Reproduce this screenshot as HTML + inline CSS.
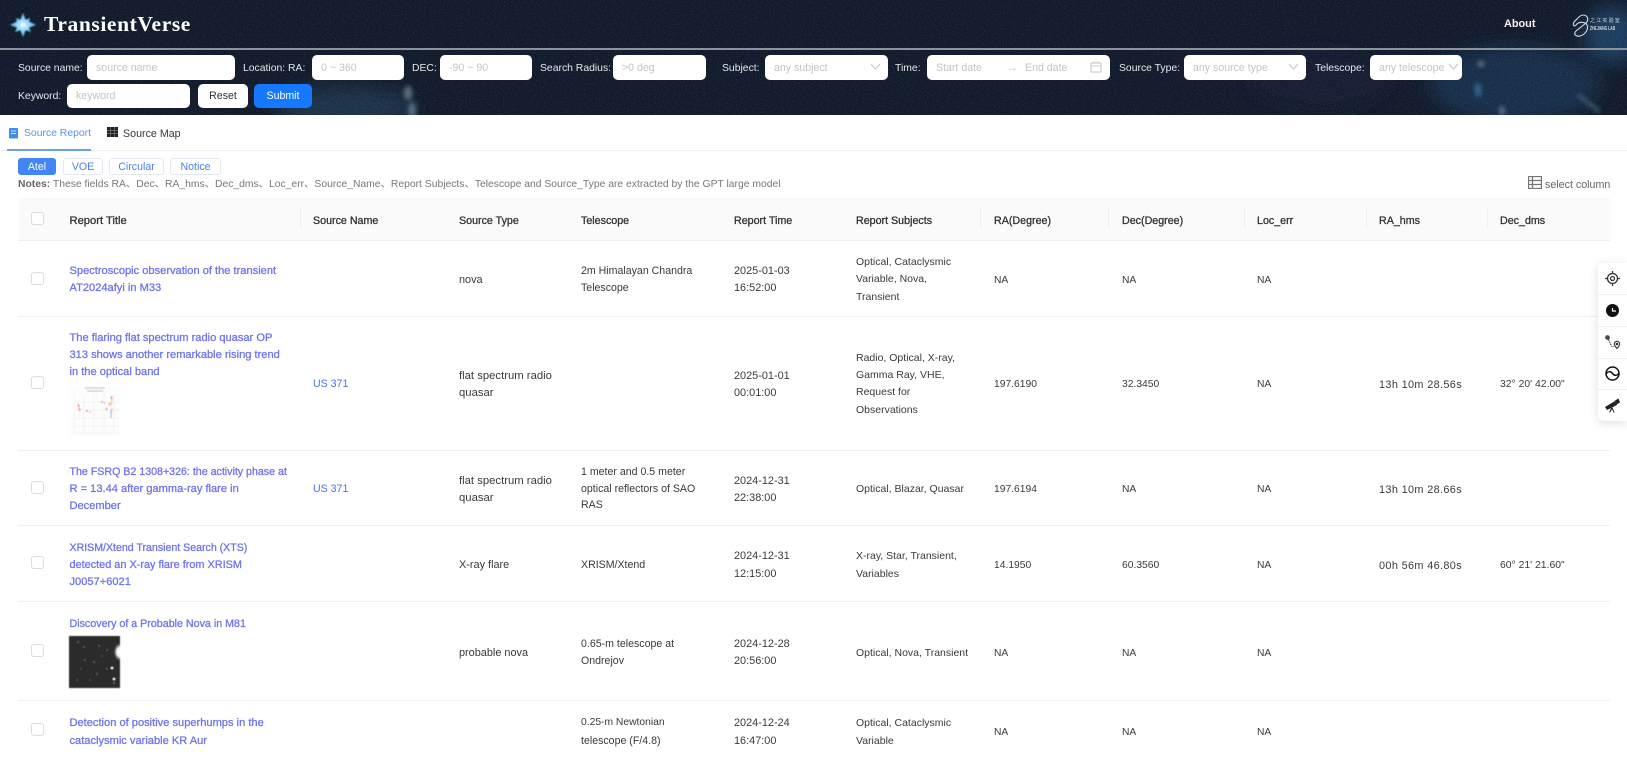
<!DOCTYPE html>
<html lang="en"><head><meta charset="utf-8"><title>TransientVerse</title>
<style>
*{box-sizing:border-box}
html,body{margin:0;padding:0;background:#fff}
body{width:1627px;height:759px;overflow:hidden;position:relative;font-family:"Liberation Sans","Noto Sans CJK SC",sans-serif;font-size:11.4px;color:#2b2b2b;filter:blur(.3px)}
#hd{position:absolute;left:0;top:0;width:1627px;height:115px;overflow:hidden;background:#111a2b}
#hd svg.bg{position:absolute;left:0;top:0}
.line{position:absolute;left:0;top:48px;width:1627px;height:2px;background:#8d939c}
.hl{position:absolute;margin-top:1px;color:#e4e6ea;font-size:10.4px;line-height:18px;white-space:nowrap}
.in{position:absolute;height:25px;background:#fff;border-radius:5px;color:#c4c4c4;font-size:10.6px;line-height:27px;padding-left:9px;white-space:nowrap}
.chev{position:absolute;right:7px;top:8px}
.btn{position:absolute;height:24px;border-radius:5px;font-size:10.6px;line-height:24px;text-align:center}
.t{position:absolute;margin-top:1px;line-height:18px;white-space:nowrap;color:#3a3a3a}
.h{margin-top:2px;font-size:10.7px;-webkit-text-stroke:.3px #333;color:#333}
.l{font-size:11.1px;color:#6f74ee;-webkit-text-stroke:.3px #6f74ee}
.u{color:#4c72e6;font-size:10.6px}
.st{font-size:10.9px}.fl{font-size:11.3px}.tel{font-size:10.6px}.tm{font-size:10.9px}.sb{font-size:10.5px}
.ra{font-size:10.3px;margin-top:2px}.hm{font-size:10.9px;letter-spacing:.35px;margin-top:2px}.dm{font-size:10.4px;margin-top:2px}
.r{position:absolute;left:18px;width:1592px;height:1px;background:#f0f0f0}
.c{position:absolute;left:31px;width:13px;height:13px;border:1px solid #dcdcdc;border-radius:3px;background:#fff}
.s{position:absolute;top:208px;width:1px;height:21px;background:#efefef}
.tag{position:absolute;top:158px;height:17px;border:1px solid #e4e8f0;border-radius:3px;color:#4a80f0;font-size:10.6px;line-height:17px;text-align:center;background:#fff}
.side{position:absolute;left:1598px;top:263px;width:29px;height:158px;background:#fff;border-radius:5px 0 0 5px;box-shadow:0 2px 10px rgba(0,0,0,.13)}
.side i{position:absolute;left:0;width:29px;height:1px;background:#efefef}
.side svg{position:absolute;left:7px}
</style></head><body>
<div id="hd">
<svg class="bg" width="1627" height="115" xmlns="http://www.w3.org/2000/svg">
<defs>
<filter id="n" x="0" y="0" width="100%" height="100%"><feTurbulence type="fractalNoise" baseFrequency=".9" numOctaves="2" seed="4"/><feColorMatrix values="0 0 0 0 .6 0 0 0 0 .68 0 0 0 0 .8 1.6 0 0 0 -.78"/></filter>
<filter id="b"><feGaussianBlur stdDeviation="9"/></filter>
<filter id="b2"><feGaussianBlur stdDeviation="2.5"/></filter>
</defs>
<rect width="1627" height="115" fill="#111a2b"/>
<g filter="url(#b)">
<ellipse cx="345" cy="108" rx="70" ry="22" fill="#1b3049"/>
<ellipse cx="1515" cy="85" rx="85" ry="40" fill="#182e4a"/>
<ellipse cx="1612" cy="35" rx="28" ry="28" fill="#1f3d60"/>
<ellipse cx="1320" cy="80" rx="70" ry="30" fill="#141f33"/>
</g>
<g filter="url(#b2)">
<ellipse cx="408" cy="93" rx="4" ry="7" fill="#5f6f7f"/>
<ellipse cx="412" cy="110" rx="4" ry="8" fill="#4f6c88"/>
<ellipse cx="1478" cy="90" rx="3" ry="7" fill="#37689a"/>
<ellipse cx="1481" cy="64" rx="3" ry="2.5" fill="#76899a"/>
<ellipse cx="1502" cy="111" rx="2.5" ry="5" fill="#627d96"/>
<path d="M1578 95 L1600 112" stroke="#4e6b87" stroke-width="2.5"/>
</g>
<rect width="1627" height="115" filter="url(#n)" opacity=".25"/>
</svg>
<div class="line"></div>
<svg style="position:absolute;left:9px;top:11px" width="28" height="28" viewBox="0 0 32 30"><defs><radialGradient id="st"><stop offset="0" stop-color="#fff"/><stop offset=".3" stop-color="#a9e2ff"/><stop offset="1" stop-color="#3fa6e8"/></radialGradient><filter id="gl"><feGaussianBlur stdDeviation=".8"/></filter></defs><path filter="url(#gl)" d="M16 1L19 9 24 7 23 11 31 15 23 18 25 23 19 21 16 29 13 21 7 23 9 18 1 15 9 11 8 7 13 9Z" fill="url(#st)"/></svg>
<div style="position:absolute;left:44px;top:11px;font-family:'Liberation Serif',serif;font-weight:700;font-size:21.5px;line-height:26px;color:#fff;letter-spacing:.6px;white-space:nowrap">TransientVerse</div>
<div style="position:absolute;left:1504px;top:15px;font-size:10.9px;font-weight:700;line-height:18px;color:#f2f2f2">About</div>
<svg style="position:absolute;left:1571px;top:14px" width="20" height="24" viewBox="0 0 20 24" fill="none" stroke="#d8dadd" stroke-width="1.1"><path d="M12 1C17 1 18 6 15 9L5 17C2 20 5 23 9 22 14 21 18 15 16 11 15 8 8 7 5 11 2 14 1 9 5 6 7 4 9 1 12 1Z"/></svg>
<div style="position:absolute;left:1590px;top:17px;font-size:5px;line-height:8px;color:#cfd2d6;letter-spacing:1.2px;white-space:nowrap">之江实验室</div>
<div style="position:absolute;left:1590px;top:25px;font-size:5.5px;font-weight:700;line-height:8px;color:#cfd2d6;white-space:nowrap;transform:scaleX(.62);transform-origin:0 0">ZHEJIANG LAB</div>

<div class="hl" style="left:18px;top:59px">Source name:</div>
<div class="in" style="left:87px;top:55px;width:148px">source name</div>
<div class="hl" style="left:243px;top:59px">Location: RA:</div>
<div class="in" style="left:312px;top:55px;width:92px">0 ~ 360</div>
<div class="hl" style="left:412px;top:59px">DEC:</div>
<div class="in" style="left:440px;top:55px;width:92px">-90 ~ 90</div>
<div class="hl" style="left:540px;top:59px">Search Radius:</div>
<div class="in" style="left:613px;top:55px;width:93px">&gt;0 deg</div>
<div class="hl" style="left:722px;top:59px">Subject:</div>
<div class="in" style="left:765px;top:55px;width:123px">any subject<svg class="chev" width="11" height="8" viewBox="0 0 11 8" fill="none" stroke="#c4c4c4"><path d="M1 1l4.5 5L10 1"/></svg></div>
<div class="hl" style="left:895px;top:59px">Time:</div>
<div class="in" style="left:927px;top:55px;width:183px">Start date<span style="position:absolute;left:80px;top:0">→</span><span style="position:absolute;left:98px;top:0">End date</span><svg style="position:absolute;right:8px;top:6px" width="12" height="12" viewBox="0 0 12 12" fill="none" stroke="#c4c4c4"><rect x="1" y="2" width="10" height="9"/><path d="M1 5h10M4 .5v2M8 .5v2"/></svg></div>
<div class="hl" style="left:1119px;top:59px">Source Type:</div>
<div class="in" style="left:1184px;top:55px;width:122px">any source type<svg class="chev" width="11" height="8" viewBox="0 0 11 8" fill="none" stroke="#c4c4c4"><path d="M1 1l4.5 5L10 1"/></svg></div>
<div class="hl" style="left:1315px;top:59px">Telescope:</div>
<div class="in" style="left:1370px;top:55px;width:92px">any telescope<svg class="chev" style="right:3px" width="11" height="8" viewBox="0 0 11 8" fill="none" stroke="#c4c4c4"><path d="M1 1l4.5 5L10 1"/></svg></div>

<div class="hl" style="left:18px;top:87px">Keyword:</div>
<div class="in" style="left:67px;top:84px;width:123px;height:24px;line-height:25px">keyword</div>
<div class="btn" style="left:198px;top:84px;width:50px;background:#fff;color:#333">Reset</div>
<div class="btn" style="left:254px;top:84px;width:58px;background:#1677ff;color:#fff">Submit</div>
</div>

<svg style="position:absolute;left:8px;top:127px" width="11" height="12" viewBox="0 0 11 12"><rect x="1" y="1" width="9" height="10.5" rx="1" fill="#3f8ee8"/><path d="M3 4h5M3 6.5h5" stroke="#cfe3fa"/></svg>
<div class="t" style="left:24px;top:124px;color:#5a93e8;font-size:10.4px">Source Report</div>
<svg style="position:absolute;left:107px;top:127px" width="11" height="10" viewBox="0 0 11 10"><rect width="11" height="10" fill="#222"/><path d="M0 3.3h11M0 6.6h11M3.6 0v10M7.3 0v10" stroke="#888" stroke-width=".6"/></svg>
<div class="t" style="left:123px;top:124px;font-size:10.7px">Source Map</div>
<div style="position:absolute;left:0;top:150px;width:1627px;height:1px;background:#f0f0f0"></div>
<div style="position:absolute;left:7px;top:149px;width:84px;height:2px;background:#6aa0e8"></div>

<div class="tag" style="left:18px;width:38px;background:#4285f4;border-color:#4285f4;color:#fff">Atel</div>
<div class="tag" style="left:63px;width:40px">VOE</div>
<div class="tag" style="left:109px;width:55px">Circular</div>
<div class="tag" style="left:170px;width:51px">Notice</div>

<div class="t" style="left:18px;top:175px;color:#777;font-size:10.35px"><b style="color:#666">Notes:</b> These fields RA、Dec、RA_hms、Dec_dms、Loc_err、Source_Name、Report Subjects、Telescope and Source_Type are extracted by the GPT large model</div>
<svg style="position:absolute;left:1528px;top:176px" width="14" height="13" viewBox="0 0 14 13" fill="none" stroke="#777" stroke-width="1.3"><rect x=".5" y=".5" width="13" height="12"/><path d="M.5 4.5h13M.5 8.5h13M4.5 .5v12"/></svg>
<div class="t" style="left:1545px;top:175px;color:#666;font-size:10.7px">select column</div>

<div style="position:absolute;left:18px;top:198px;width:1592px;height:43px;background:#fafafa;border-bottom:1px solid #f0f0f0"></div>
<div class="c" style="top:212px"></div>
<div class="s" style="left:300px"></div><div class="s" style="left:980px"></div><div class="s" style="left:1108px"></div><div class="s" style="left:1244px"></div><div class="s" style="left:1366px"></div><div class="s" style="left:1487px"></div>
<div class="t h" style="left:69.5px;top:210px;font-size:11.2px">Report Title</div>
<div class="t h" style="left:313px;top:210px">Source Name</div>
<div class="t h" style="left:459px;top:210px">Source Type</div>
<div class="t h" style="left:581px;top:210px">Telescope</div>
<div class="t h" style="left:734px;top:210px">Report Time</div>
<div class="t h" style="left:856px;top:210px">Report Subjects</div>
<div class="t h" style="left:994px;top:210px">RA(Degree)</div>
<div class="t h" style="left:1122px;top:210px">Dec(Degree)</div>
<div class="t h" style="left:1257px;top:210px">Loc_err</div>
<div class="t h" style="left:1379px;top:210px">RA_hms</div>
<div class="t h" style="left:1500px;top:210px">Dec_dms</div>

<div class="r" style="top:316px"></div><div class="r" style="top:450px"></div><div class="r" style="top:525px"></div><div class="r" style="top:601px"></div><div class="r" style="top:700px"></div>

<!-- row 1 -->
<div class="c" style="top:272px"></div>
<div class="t l" style="left:69.5px;top:261px">Spectroscopic observation of the transient</div>
<div class="t l" style="left:69.5px;top:278px">AT2024afyi in M33</div>
<div class="t st" style="left:459px;top:270px">nova</div>
<div class="t tel" style="left:581px;top:261px">2m Himalayan Chandra</div>
<div class="t tel" style="left:581px;top:278px">Telescope</div>
<div class="t tm" style="left:734px;top:261px">2025-01-03</div>
<div class="t tm" style="left:734px;top:278px">16:52:00</div>
<div class="t sb" style="left:856px;top:252px">Optical, Cataclysmic</div>
<div class="t sb" style="left:856px;top:269px">Variable, Nova,</div>
<div class="t sb" style="left:856px;top:287px">Transient</div>
<div class="t ra" style="left:994px;top:270px">NA</div>
<div class="t ra" style="left:1122px;top:270px">NA</div>
<div class="t ra" style="left:1257px;top:270px">NA</div>

<!-- row 2 -->
<div class="c" style="top:376px"></div>
<div class="t l" style="left:69.5px;top:328px">The flaring flat spectrum radio quasar OP</div>
<div class="t l" style="left:69.5px;top:345px">313 shows another remarkable rising trend</div>
<div class="t l" style="left:69.5px;top:362px">in the optical band</div>
<svg style="position:absolute;left:69px;top:386px;filter:blur(.5px)" width="51" height="51" viewBox="0 0 51 51"><rect width="51" height="51" fill="#fdfdfd"/><path d="M5 8V47H50M5 16h45M5 24h45M5 32h45M5 40h45M15 8v39M25 8v39M35 8v39M45 8v39" stroke="#efefef" fill="none" stroke-width=".7"/><path d="M16 2h20M18 5h16" stroke="#aab" stroke-width=".8"/><path d="M9 18l1 3M10 22l1 3M17 25h2M21 26h1M32 16h2M35 17h1M37 24l1-2M40 19l1-2M42 13l1-3" stroke="#ee8080" stroke-width="1.2"/><path d="M43 12l-1 8M43 22l-1 6M10 28v1" stroke="#f3bd88" stroke-width="1"/><path d="M42 24v8" stroke="#90b8e0"/></svg>
<div class="t u" style="left:313px;top:374px">US 371</div>
<div class="t fl" style="left:459px;top:366px">flat spectrum radio</div>
<div class="t fl" style="left:459px;top:383px">quasar</div>
<div class="t tm" style="left:734px;top:366px">2025-01-01</div>
<div class="t tm" style="left:734px;top:383px">00:01:00</div>
<div class="t sb" style="left:856px;top:348px">Radio, Optical, X-ray,</div>
<div class="t sb" style="left:856px;top:365px">Gamma Ray, VHE,</div>
<div class="t sb" style="left:856px;top:382px">Request for</div>
<div class="t sb" style="left:856px;top:400px">Observations</div>
<div class="t ra" style="left:994px;top:374px">197.6190</div>
<div class="t ra" style="left:1122px;top:374px">32.3450</div>
<div class="t ra" style="left:1257px;top:374px">NA</div>
<div class="t hm" style="left:1379px;top:374px">13h 10m 28.56s</div>
<div class="t dm" style="left:1500px;top:374px">32° 20' 42.00"</div>

<!-- row 3 -->
<div class="c" style="top:481px"></div>
<div class="t l" style="left:69.5px;top:462px;font-size:10.65px">The FSRQ B2 1308+326: the activity phase at</div>
<div class="t l" style="left:69.5px;top:479px">R = 13.44 after gamma-ray flare in</div>
<div class="t l" style="left:69.5px;top:496px">December</div>
<div class="t u" style="left:313px;top:479px">US 371</div>
<div class="t fl" style="left:459px;top:471px">flat spectrum radio</div>
<div class="t fl" style="left:459px;top:488px">quasar</div>
<div class="t tel" style="left:581px;top:462px">1 meter and 0.5 meter</div>
<div class="t tel" style="left:581px;top:479px">optical reflectors of SAO</div>
<div class="t tel" style="left:581px;top:495px">RAS</div>
<div class="t tm" style="left:734px;top:471px">2024-12-31</div>
<div class="t tm" style="left:734px;top:488px">22:38:00</div>
<div class="t sb" style="left:856px;top:479px">Optical, Blazar, Quasar</div>
<div class="t ra" style="left:994px;top:479px">197.6194</div>
<div class="t ra" style="left:1122px;top:479px">NA</div>
<div class="t ra" style="left:1257px;top:479px">NA</div>
<div class="t hm" style="left:1379px;top:479px">13h 10m 28.66s</div>

<!-- row 4 -->
<div class="c" style="top:556px"></div>
<div class="t l" style="left:69.5px;top:538px;font-size:10.6px">XRISM/Xtend Transient Search (XTS)</div>
<div class="t l" style="left:69.5px;top:555px;font-size:10.9px">detected an X-ray flare from XRISM</div>
<div class="t l" style="left:69.5px;top:572px">J0057+6021</div>
<div class="t st" style="left:459px;top:555px">X-ray flare</div>
<div class="t tel" style="left:581px;top:555px">XRISM/Xtend</div>
<div class="t tm" style="left:734px;top:546px">2024-12-31</div>
<div class="t tm" style="left:734px;top:564px">12:15:00</div>
<div class="t sb" style="left:856px;top:546px">X-ray, Star, Transient,</div>
<div class="t sb" style="left:856px;top:564px">Variables</div>
<div class="t ra" style="left:994px;top:555px">14.1950</div>
<div class="t ra" style="left:1122px;top:555px">60.3560</div>
<div class="t ra" style="left:1257px;top:555px">NA</div>
<div class="t hm" style="left:1379px;top:555px">00h 56m 46.80s</div>
<div class="t dm" style="left:1500px;top:555px">60° 21' 21.60"</div>

<!-- row 5 -->
<div class="c" style="top:644px"></div>
<div class="t l" style="left:69.5px;top:614px;font-size:10.7px">Discovery of a Probable Nova in M81</div>
<svg style="position:absolute;left:69px;top:636px;filter:blur(.5px)" width="51" height="52" viewBox="0 0 51 52"><defs><radialGradient id="gw"><stop offset="0" stop-color="#fff"/><stop offset=".5" stop-color="#eee"/><stop offset="1" stop-color="#2b2b2b" stop-opacity="0"/></radialGradient></defs><rect width="51" height="52" fill="#2b2b2b"/><g fill="#8f8f8f"><circle cx="9" cy="6" r=".8"/><circle cx="15" cy="11" r=".7"/><circle cx="30" cy="10" r=".7"/><circle cx="38" cy="14" r=".7"/><circle cx="16" cy="24" r=".7"/><circle cx="25" cy="26" r=".8"/><circle cx="33" cy="20" r=".6"/><circle cx="12" cy="33" r=".6"/><circle cx="28" cy="38" r=".7"/><circle cx="38" cy="33" r=".7"/><circle cx="21" cy="44" r=".6"/><circle cx="8" cy="44" r=".6"/><circle cx="45" cy="47" r=".8"/></g><circle cx="43" cy="32" r="1.4" fill="#fff"/><circle cx="45" cy="43" r="1.4" fill="#fff"/><ellipse cx="51" cy="16" rx="7" ry="10" fill="url(#gw)"/></svg>
<div class="t st" style="left:459px;top:643px">probable nova</div>
<div class="t tel" style="left:581px;top:634px">0.65-m telescope at</div>
<div class="t tel" style="left:581px;top:651px">Ondrejov</div>
<div class="t tm" style="left:734px;top:634px">2024-12-28</div>
<div class="t tm" style="left:734px;top:651px">20:56:00</div>
<div class="t sb" style="left:856px;top:643px">Optical, Nova, Transient</div>
<div class="t ra" style="left:994px;top:643px">NA</div>
<div class="t ra" style="left:1122px;top:643px">NA</div>
<div class="t ra" style="left:1257px;top:643px">NA</div>

<!-- row 6 -->
<div class="c" style="top:723px"></div>
<div class="t l" style="left:69.5px;top:713px">Detection of positive superhumps in the</div>
<div class="t l" style="left:69.5px;top:731px">cataclysmic variable KR Aur</div>
<div class="t" style="left:581px;top:713px;font-size:10.3px">0.25-m Newtonian</div>
<div class="t tel" style="left:581px;top:731px">telescope (F/4.8)</div>
<div class="t tm" style="left:734px;top:713px">2024-12-24</div>
<div class="t tm" style="left:734px;top:731px">16:47:00</div>
<div class="t sb" style="left:856px;top:713px">Optical, Cataclysmic</div>
<div class="t sb" style="left:856px;top:731px">Variable</div>
<div class="t ra" style="left:994px;top:722px">NA</div>
<div class="t ra" style="left:1122px;top:722px">NA</div>
<div class="t ra" style="left:1257px;top:722px">NA</div>

<div class="side">
<i style="top:31px"></i><i style="top:63px"></i><i style="top:95px"></i><i style="top:126px"></i>
<svg style="top:8px" width="15" height="15" viewBox="0 0 15 15" fill="none" stroke="#333"><circle cx="7.5" cy="7.5" r="5" stroke-width="1.3"/><circle cx="7.5" cy="7.5" r="2" fill="none" stroke-width="1.2"/><path d="M7.5 0v2.5M7.5 12.5V15M0 7.5h2.5M12.5 7.5H15" stroke-width="1.2"/></svg>
<svg style="top:40px" width="15" height="15" viewBox="0 0 15 15"><circle cx="7.5" cy="7.5" r="6.5" fill="#111"/><path d="M7.5 5v3H11" stroke="#fff" fill="none" stroke-width="1.2"/></svg>
<svg style="top:72px" width="15" height="15" viewBox="0 0 15 15" fill="none" stroke="#333"><circle cx="2.5" cy="2.5" r="1.8" fill="#555"/><path d="M3.5 4.5L6 10c.6 1.5 1.5 1.5 3 1.5" stroke-dasharray="1.5 .8"/><path d="M12 13.5c-1.8-2-2.7-3.2-2.7-4.5a2.7 2.7 0 0 1 5.4 0c0 1.3-.9 2.5-2.7 4.5z" stroke-width="1.1"/><circle cx="12" cy="9" r=".8" fill="#222"/></svg>
<svg style="top:103px" width="15" height="15" viewBox="0 0 15 15" fill="none" stroke="#111" stroke-width="1.5"><circle cx="7.5" cy="7.5" r="6.5"/><path d="M1 8C3 5 5.5 5 7.5 7.5S12 10 14 7"/></svg>
<svg style="top:135px" width="15" height="15" viewBox="0 0 15 15" fill="#222"><path d="M0 9l10-6 2 4-10 5zM10 2.5l3.500-2 1.500 4-3.500 2z"/><path d="M6 10l-2 4.500h1L7 11l1.500 3.500h1L7.500 9.500z"/></svg>
</div>
</body></html>
